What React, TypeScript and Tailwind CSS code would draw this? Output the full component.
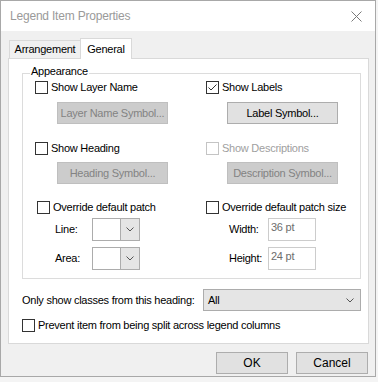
import type { ReactNode } from "react"

function Check({ checked = false, disabled = false, label, className = "" }: { checked?: boolean; disabled?: boolean; label: string; className?: string }) {
    return (
        <div className={`flex items-center gap-[3px] h-[13px] ${className}`}>
            <div className={`w-[13px] h-[13px] shrink-0 bg-white border ${disabled ? "border-[#c4c4c4]" : "border-[#333333]"}`}>
                {checked && (
                    <svg width="11" height="11" viewBox="0 0 11 11">
                        <path d="M1.5 5.5 L4 8 L9.5 2.5" fill="none" stroke="#333" strokeWidth="1" />
                    </svg>
                )}
            </div>
            <span className={disabled ? "text-[#a0a0a0]" : "text-black"}>{label}</span>
        </div>
    )
}

function Btn({ children, disabled = false, className = "" }: { children: ReactNode; disabled?: boolean; className?: string }) {
    return (
        <div
            className={`w-[111px] h-[22px] flex items-center justify-center border ${
                disabled ? "bg-[#cccccc] border-[#bfbfbf] text-[#838383]" : "bg-[#e1e1e1] border-[#adadad] text-black"
            } ${className}`}
        >
            {children}
        </div>
    )
}

function Chevron() {
    return (
        <svg width="8" height="5" viewBox="0 0 8 5">
            <path d="M0.5 0.5 L4 4 L7.5 0.5" fill="none" stroke="#555" strokeWidth="1" />
        </svg>
    )
}

function Combo() {
    return (
        <div className="w-[48px] h-[23px] flex border border-[#acacac] bg-white">
            <div className="flex-1" />
            <div className="w-[19px] bg-[#e5e5e5] border-l border-[#acacac] flex items-center justify-center">
                <Chevron />
            </div>
        </div>
    )
}

function PtBox({ value }: { value: string }) {
    return (
        <div className="w-[48px] h-[23px] border border-[#cccccc] bg-white pl-[2px] pt-[2px] text-[#6d6d6d]">
            {value}
        </div>
    )
}

export default function App() {
    return (
        <div className="w-[378px] h-[382px] bg-[#f4f4f4] overflow-hidden font-['Liberation_Sans',Arial,sans-serif] text-[11px] leading-[13px] tracking-[-0.25px] text-black">
            <div className="w-[376px] h-[377px] border border-[#a8a8a8] flex flex-col bg-[#f0f0f0]">
                {/* title bar */}
                <div className="h-[30px] shrink-0 bg-white flex items-center justify-between pl-[9px] pr-[13px]">
                    <span className="text-[12px] tracking-[-0.2px] text-[#9a9a9a]">Legend Item Properties</span>
                    <svg width="11" height="11" viewBox="0 0 11 11">
                        <path d="M0.5 0.5 L10.5 10.5 M10.5 0.5 L0.5 10.5" stroke="#7a7a7a" strokeWidth="1" />
                    </svg>
                </div>

                <div className="flex-1 px-[7px] pt-[7px]">
                    {/* tabs */}
                    <div className="flex h-[21px] relative z-10">
                        <div className="ml-[1px] mt-[2px] w-[72px] h-[18px] border border-b-0 border-[#d9d9d9] bg-[#f0f0f0] flex items-center justify-center">
                            Arrangement
                        </div>
                        <div className="-ml-px w-[52px] h-[21px] border border-b-0 border-[#d9d9d9] bg-white flex items-center justify-center">
                            General
                        </div>
                    </div>

                    {/* panel */}
                    <div className="-mt-px w-[361px] h-[286px] bg-white border border-[#d9d9d9] pl-[13px]">
                        <div className="relative mt-[14px] w-[339px] h-[206px] border border-[#dcdcdc] pl-[12px] pt-[7px]">
                            <span className="absolute -top-[9px] left-[7px] px-[1px] bg-white">Appearance</span>
                            <div className="grid grid-cols-[171px_1fr]">
                                <div className="flex flex-col">
                                    <Check label="Show Layer Name" />
                                    <Btn disabled className="mt-[8px] ml-[22px]">Layer Name Symbol...</Btn>
                                    <Check label="Show Heading" className="mt-[18px]" />
                                    <Btn disabled className="mt-[7px] ml-[22px]">Heading Symbol...</Btn>
                                    <Check label="Override default patch" className="mt-[17px] ml-[2px]" />
                                    <div className="mt-[4px] flex items-center h-[23px] pl-[20px]">
                                        <span className="w-[37px]">Line:</span>
                                        <Combo />
                                    </div>
                                    <div className="mt-[6px] flex items-center h-[23px] pl-[20px]">
                                        <span className="w-[37px]">Area:</span>
                                        <Combo />
                                    </div>
                                </div>
                                <div className="flex flex-col">
                                    <Check checked label="Show Labels" />
                                    <Btn className="mt-[8px] ml-[21px]">Label Symbol...</Btn>
                                    <Check disabled label="Show Descriptions" className="mt-[18px]" />
                                    <Btn disabled className="mt-[7px] ml-[21px]">Description Symbol...</Btn>
                                    <Check label="Override default patch size" className="mt-[17px]" />
                                    <div className="mt-[4px] flex items-center h-[23px] pl-[23px]">
                                        <span className="w-[39px]">Width:</span>
                                        <PtBox value="36 pt" />
                                    </div>
                                    <div className="mt-[6px] flex items-center h-[23px] pl-[23px]">
                                        <span className="w-[39px]">Height:</span>
                                        <PtBox value="24 pt" />
                                    </div>
                                </div>
                            </div>
                        </div>

                        <div className="mt-[10px] w-[339px] flex items-center justify-between">
                            <span>Only show classes from this heading:</span>
                            <div className="w-[158px] h-[22px] bg-[#e5e5e5] border border-[#acacac] flex items-center justify-between pl-[4px] pr-[6px]">
                                <span>All</span>
                                <Chevron />
                            </div>
                        </div>

                        <Check label="Prevent item from being split across legend columns" className="mt-[8px]" />
                    </div>

                    {/* buttons */}
                    <div className="mt-[8px] flex gap-[8px] pl-[208px] text-[12px] tracking-normal">
                        <div className="w-[73px] h-[22px] bg-[#e1e1e1] border border-[#adadad] flex items-center justify-center">OK</div>
                        <div className="w-[73px] h-[22px] bg-[#e1e1e1] border border-[#adadad] flex items-center justify-center">Cancel</div>
                    </div>
                </div>
            </div>
        </div>
    )
}
